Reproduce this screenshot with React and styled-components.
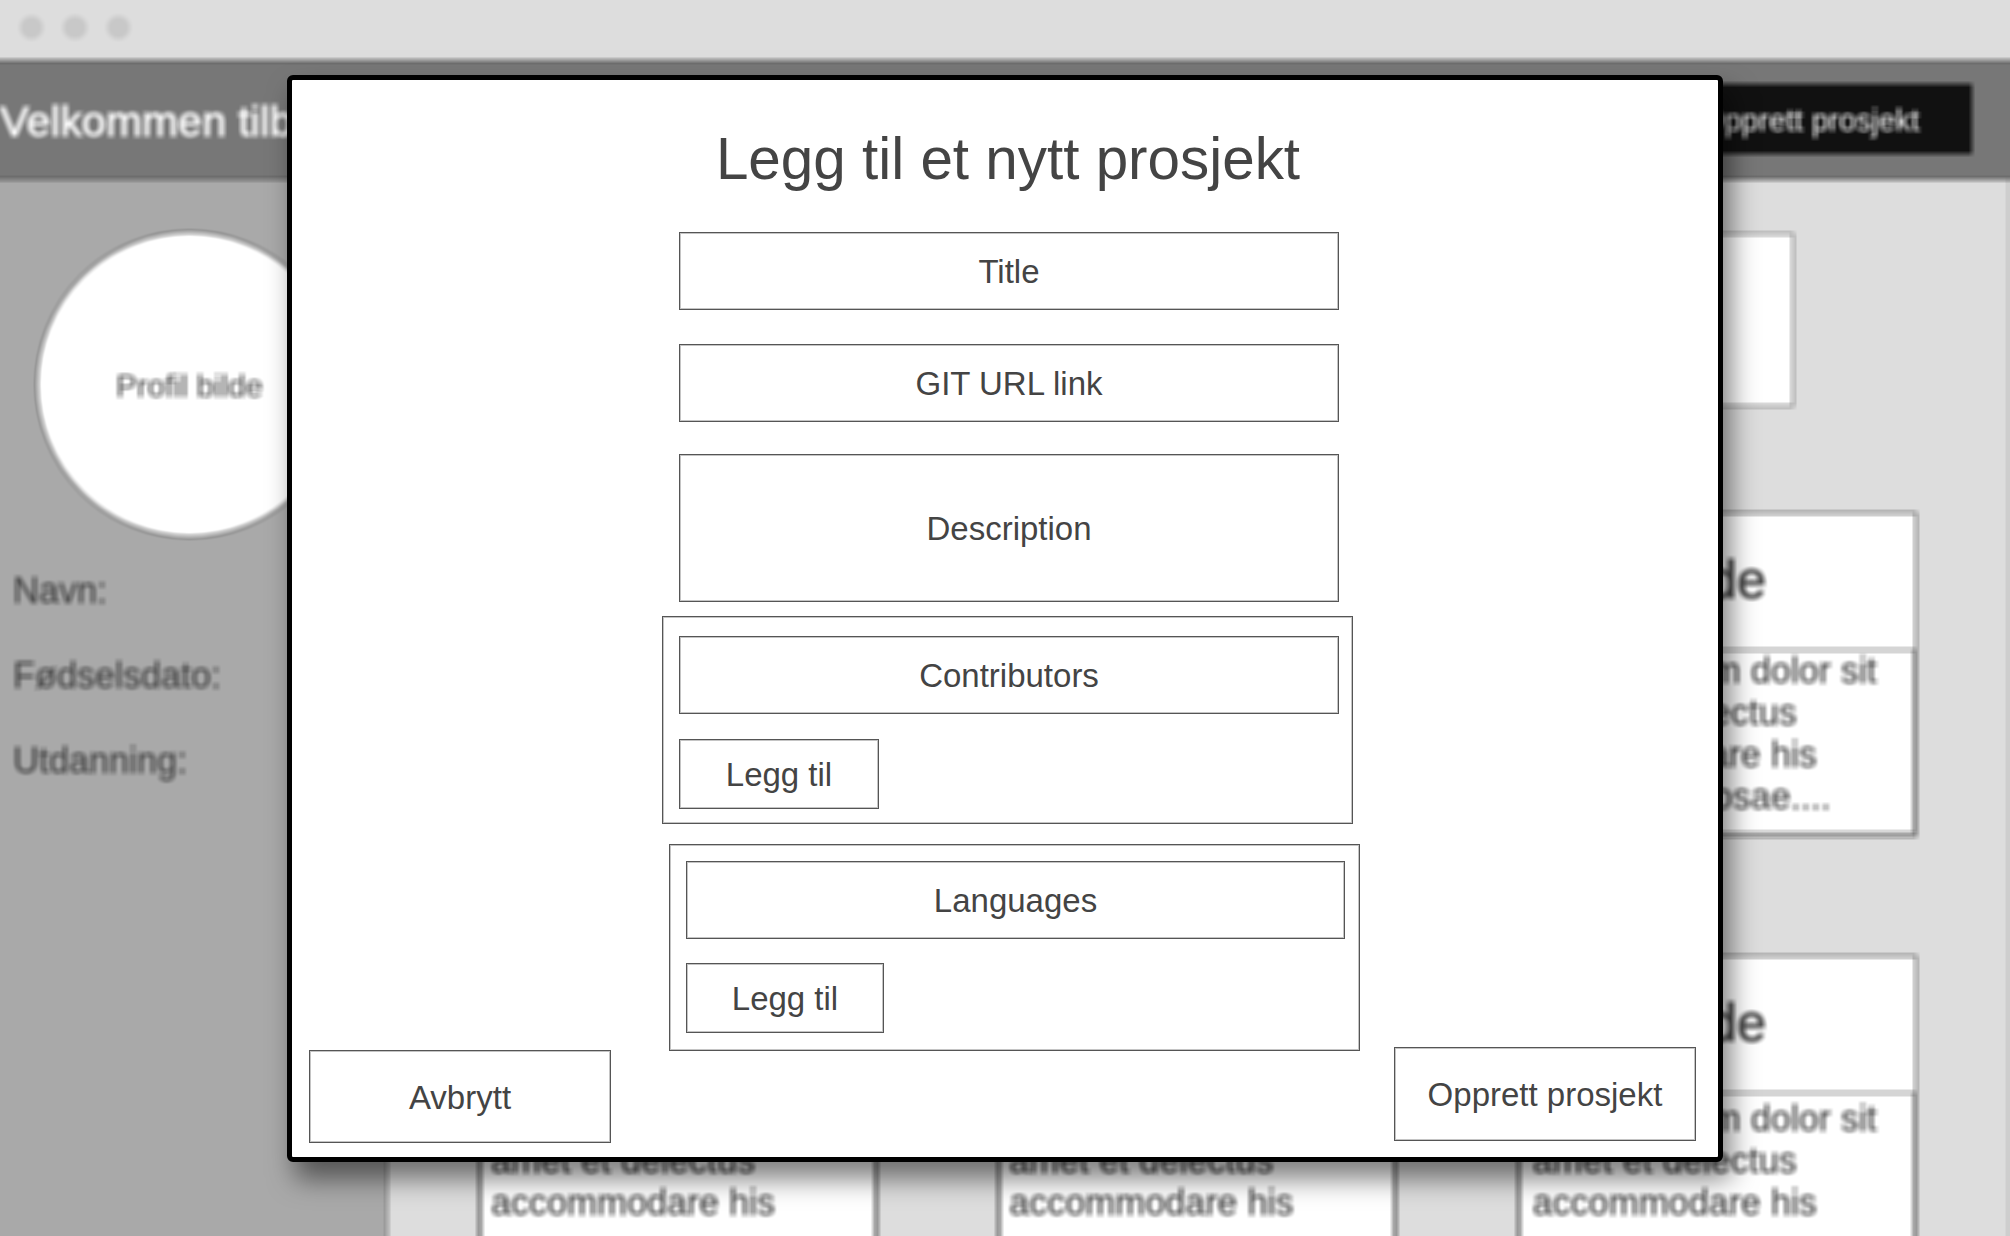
import React from "react";
import styled, { createGlobalStyle } from "styled-components";

const Global = createGlobalStyle`
  * { box-sizing: border-box; }
  body { margin: 0; overflow: hidden; background: #ddd; }
`;

const Screen = styled.div`
  position: relative;
  width: 2010px;
  height: 1236px;
  overflow: hidden;
  font-family: "Liberation Sans", Arial, sans-serif;
  color: #444;
`;

const FilterDefs = styled.svg`
  position: absolute;
  width: 0;
  height: 0;
`;

/* Bleeds 12px past the screen on the sides and bottom so the blur has no faded rim. */
const Backdrop = styled.div`
  width: 2034px;
  height: 1248px;
  margin: 0 -12px -12px;
  display: flex;
  flex-direction: column;
  background: #ddd;
  filter: url(#box-blur) blur(0.6px);
  overflow: hidden;
`;

const WindowBar = styled.div`
  flex: none;
  height: 60px;
  display: flex;
  align-items: flex-start;
  gap: 20px;
  padding: 15.5px 0 0 32px;
`;

const Dot = styled.span`
  width: 23.4px;
  height: 23.4px;
  border-radius: 50%;
  background: #c8c8c8;
`;

const Header = styled.header`
  flex: none;
  height: 120px;
  display: flex;
  align-items: center;
  justify-content: space-between;
  padding: 0 50px 2px 12px;
  background: #777;
  border: solid #555;
  border-width: 2px 0;
`;

const Welcome = styled.div`
  padding-top: 4px;
  font-size: 43.3px;
  color: #fff;
  -webkit-text-stroke: 1px #fff;
  white-space: nowrap;
`;

const HeaderButton = styled.div`
  width: 320px;
  height: 70px;
  padding: 3px 4px 0 0;
  display: flex;
  align-items: center;
  justify-content: center;
  background: #111;
  color: #fff;
  font-size: 30.8px;
`;

const Main = styled.div`
  flex: 1;
  min-height: 0;
  display: flex;
`;

const Sidebar = styled.aside`
  flex: none;
  width: 400px;
  padding: 51px 0 0 25px;
  background: #a9a9a9;
  border-right: 2px solid #777;
`;

const Avatar = styled.div`
  width: 307px;
  height: 307px;
  margin-left: 23px;
  padding-top: 3px;
  border: 2px solid #666;
  border-radius: 50%;
  background: #fff;
  display: flex;
  align-items: center;
  justify-content: center;
  font-size: 31.5px;
`;

const Facts = styled.div`
  margin-top: 33px;
  display: flex;
  flex-direction: column;
  gap: 44.8px;
  font-size: 36px;
  line-height: 40px;
  -webkit-text-stroke: 0.3px #444;
`;

const Content = styled.main`
  flex: 1;
  margin-right: 12px;
  padding: 53px 0 0 90px;
  border-right: 2px solid #aaa;
`;

const Search = styled.div`
  width: 1316px;
  height: 174px;
  background: #fff;
  border: 2px solid #777;
`;

const CardGrid = styled.div`
  margin-top: 105px;
  display: grid;
  grid-template-columns: repeat(3, 400px);
  gap: 118px 119.3px;
`;

const Card = styled.article`
  height: 325px;
  background: #fff;
  border: 2px solid #555;
`;

const CardTitle = styled.h2`
  margin: 0;
  height: 137px;
  padding: 0 7px 4px 0;
  display: flex;
  align-items: center;
  justify-content: center;
  border-bottom: 2px solid #6c6c6c;
  font-size: 53.3px;
  font-weight: 400;
  -webkit-text-stroke: 1px #444;
`;

const CardText = styled.p`
  margin: 0;
  height: 184px;
  padding: ${(p) => (p.$low ? 5 : 0)}px 0 0 ${(p) => p.$indent}px;
  border: 2px solid #777;
  border-top: 0;
  font-size: 36px;
  line-height: 42px;
  white-space: pre-line;
  -webkit-text-stroke: 0.3px #444;
`;

const CardCopy = styled.span`
  display: block;
  margin-top: -1.5px;
`;

const Dialog = styled.section`
  position: absolute;
  left: 287px;
  top: 75px;
  width: 1436px;
  height: 1087px;
  display: flex;
  flex-direction: column;
  background: #fff;
  border: 5px solid #000;
  border-radius: 6px;
  box-shadow: 8px 17px 27px rgba(0, 0, 0, 0.5);
`;

const DialogTitle = styled.h1`
  margin: 46px 0 0 6px;
  height: 66px;
  font-size: 58.4px;
  line-height: 66px;
  font-weight: 400;
  text-align: center;
`;

const Outline = styled.div`
  border: 1px solid #555;
  box-shadow: inset 0 0 0 1px #c4c4c4;
`;

const Field = styled(Outline)`
  width: ${(p) => p.$width || 660}px;
  height: ${(p) => p.$height || 78}px;
  padding-top: 2px;
  display: flex;
  align-items: center;
  justify-content: center;
  font-size: 33px;
`;

const Form = styled.div`
  margin: 40px 0 0 370px;
  width: 700px;
  display: flex;
  flex-direction: column;
`;

const Fields = styled.div`
  padding-left: 17px;
  display: flex;
  flex-direction: column;
`;

const Stack = styled.div`
  margin-top: ${(p) => p.$gap}px;
`;

const Group = styled(Outline)`
  margin: ${(p) => p.$top}px 0 0 ${(p) => p.$left}px;
  width: 691px;
  height: ${(p) => p.$height}px;
  padding: ${(p) => p.$pad}px 0 0 16px;
  display: flex;
  flex-direction: column;
  gap: ${(p) => p.$gap}px;
`;

const AddButton = styled(Field)`
  height: 70px;
`;

const Actions = styled.div`
  margin: -4px 22px 0 17px;
  display: flex;
  justify-content: space-between;
  align-items: flex-start;
`;

const ActionButton = styled(Field)`
  margin-top: ${(p) => p.$drop || 0}px;
`;

const boxKernel = Array(49).fill(1).join(" ");

const excerpt = ["Lorem ipsum dolor sit", "amet et delectus", "accommodare his", "consul copiosae...."];

const cards = [
  { id: 1, lines: 4, indent: 9 },
  { id: 2, lines: 4, indent: 8 },
  { id: 3, lines: 4, indent: 12 },
  { id: 4, lines: 3, indent: 9, low: true },
  { id: 5, lines: 3, indent: 8, low: true },
  { id: 6, lines: 3, indent: 12, low: true },
];

export default function App() {
  return (
    <Screen>
      <Global />
      <FilterDefs aria-hidden="true">
        <filter id="box-blur" x="0" y="0" width="1" height="1" colorInterpolationFilters="sRGB">
          <feConvolveMatrix order="7" kernelMatrix={boxKernel} divisor="49" edgeMode="duplicate" preserveAlpha="true" />
        </filter>
      </FilterDefs>
      <Backdrop>
        <WindowBar><Dot /><Dot /><Dot /></WindowBar>
        <Header>
          <Welcome>Velkommen tilbake</Welcome>
          <HeaderButton>Opprett prosjekt</HeaderButton>
        </Header>
        <Main>
          <Sidebar>
            <Avatar>Profil bilde</Avatar>
            <Facts>
              <div>Navn:</div>
              <div>Fødselsdato:</div>
              <div>Utdanning:</div>
            </Facts>
          </Sidebar>
          <Content>
            <Search />
            <CardGrid>
              {cards.map((card) => (
                <Card key={card.id}>
                  <CardTitle>Side</CardTitle>
                  <CardText $low={card.low} $indent={card.indent}>
                    <CardCopy>{excerpt.slice(0, card.lines).join("\n")}</CardCopy>
                  </CardText>
                </Card>
              ))}
            </CardGrid>
          </Content>
        </Main>
      </Backdrop>
      <Dialog>
        <DialogTitle>Legg til et nytt prosjekt</DialogTitle>
        <Form>
          <Fields>
            <Field>Title</Field>
            <Stack $gap={34}><Field>GIT URL link</Field></Stack>
            <Stack $gap={32}><Field $height={148}>Description</Field></Stack>
          </Fields>
          <Group $top={14} $left={0} $height={208} $pad={19} $gap={25}>
            <Field>Contributors</Field>
            <AddButton $width={200}>Legg til</AddButton>
          </Group>
          <Group $top={20} $left={7} $height={207} $pad={16} $gap={24}>
            <Field $width={659}>Languages</Field>
            <AddButton $width={198}>Legg til</AddButton>
          </Group>
        </Form>
        <Actions>
          <ActionButton $width={302} $height={93} $drop={3}>Avbrytt</ActionButton>
          <ActionButton $width={302} $height={94}>Opprett prosjekt</ActionButton>
        </Actions>
      </Dialog>
    </Screen>
  );
}
